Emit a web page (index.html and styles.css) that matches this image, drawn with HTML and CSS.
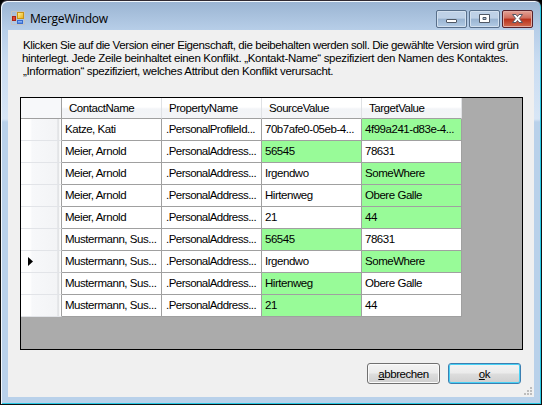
FILE: index.html
```html
<!DOCTYPE html>
<html lang="de">
<head>
<meta charset="utf-8">
<title>MergeWindow</title>
<link rel="stylesheet" href="styles.css">
</head>
<body>
<div class="window">
  <header class="titlebar">
    <svg class="app-icon" width="14" height="14" viewBox="0 0 14 14">
      <defs>
        <linearGradient id="gold" x2="1" y2="1"><stop stop-color="#fff3a0"/><stop offset="1" stop-color="#e9ae10"/></linearGradient>
        <linearGradient id="blue" x2="0" y2="1"><stop stop-color="#a9cdff"/><stop offset="1" stop-color="#3f77df"/></linearGradient>
      </defs>
      <path d="M.5 .5H13.5V13.5H.5Z M.5 9.5H5.5V.5" fill="none" stroke="#c3c3c3"/>
      <rect x="6.500" y="1.500" width="6" height="6" fill="url(#gold)" stroke="#c89314"/>
      <rect x="1.500" y="5.500" width="3" height="4" fill="#e04632" stroke="#a8261a"/>
      <rect x="6.500" y="9.500" width="5" height="3" fill="url(#blue)" stroke="#3a6ccc"/>
    </svg>
    <h1 class="title">MergeWindow</h1>
    <div class="controls">
      <span class="control"><svg width="31" height="18"><rect x="10.500" y="9.500" width="10" height="3" rx=".5" fill="#fff" stroke="#4f5865"/></svg></span>
      <span class="control"><svg width="31" height="18"><path d="M10.500 4.500h10v8h-10z M14 7.500h3v2h-3z" fill="#fff" fill-rule="evenodd" stroke="#4f5865"/></svg></span>
      <span class="control close"><svg width="31" height="18"><path d="M10.500 4.500h3.500l1.500 2 1.500-2h3.500l-3.200 4 3.200 4h-3.500l-1.500-2-1.500 2h-3.500l3.200-4z" fill="#fff" stroke="#565663"/></svg></span>
    </div>
  </header>
  <main class="client">
    <p class="intro">
      <span class="line l1">Klicken Sie auf die Version einer Eigenschaft, die beibehalten werden soll. Die gewählte Version wird grün</span>
      <span class="line l2">hinterlegt. Jede Zeile beinhaltet einen Konflikt. „Kontakt-Name“ spezifiziert den Namen des Kontaktes.</span>
      <span class="line l3">„Information“ spezifiziert, welches Attribut den Konflikt verursacht.</span>
    </p>
    <div class="grid">
      <table>
        <thead><tr><th></th><th>ContactName</th><th>PropertyName</th><th>SourceValue</th><th>TargetValue</th></tr></thead>
        <tbody>
          <tr><th></th><td>Katze, Kati</td><td>.PersonalProfileId...</td><td>70b7afe0-05eb-4...</td><td class="on">4f99a241-d83e-4...</td></tr>
          <tr><th></th><td>Meier, Arnold</td><td>.PersonalAddress...</td><td class="on">56545</td><td>78631</td></tr>
          <tr><th></th><td>Meier, Arnold</td><td>.PersonalAddress...</td><td>Irgendwo</td><td class="on">SomeWhere</td></tr>
          <tr><th></th><td>Meier, Arnold</td><td>.PersonalAddress...</td><td>Hirtenweg</td><td class="on">Obere Galle</td></tr>
          <tr><th></th><td>Meier, Arnold</td><td>.PersonalAddress...</td><td>21</td><td class="on">44</td></tr>
          <tr><th></th><td>Mustermann, Sus...</td><td>.PersonalAddress...</td><td class="on">56545</td><td>78631</td></tr>
          <tr><th><svg class="marker" width="5" height="9"><path d="M0 0L5 4.500 0 9z"/></svg></th><td>Mustermann, Sus...</td><td>.PersonalAddress...</td><td>Irgendwo</td><td class="on">SomeWhere</td></tr>
          <tr><th></th><td>Mustermann, Sus...</td><td>.PersonalAddress...</td><td class="on">Hirtenweg</td><td>Obere Galle</td></tr>
          <tr><th></th><td>Mustermann, Sus...</td><td>.PersonalAddress...</td><td class="on">21</td><td>44</td></tr>
        </tbody>
      </table>
    </div>
    <div class="actions">
      <button class="btn"><span><u>a</u>bbrechen</span></button>
      <button class="btn default"><span><u>o</u>k</span></button>
    </div>
    <svg class="grip" width="9" height="9" fill="#bdbdbd"><path d="M6 0h2v2h-2zM3 3h2v2h-2zM6 3h2v2h-2zM0 6h2v2h-2zM3 6h2v2h-2zM6 6h2v2h-2z"/></svg>
  </main>
</div>
</body>
</html>
```
FILE: styles.css
```css
* { box-sizing: border-box; }
body {
  margin: 0;
  background: #000;
  font: 11.5px/14px "Liberation Sans", Arial, sans-serif;
  color: #000;
  overflow: hidden;
}
.window {
  width: 542px;
  height: 405px;
  padding: 0 6px 5px;
  border: 1px solid #111;
  border-top-color: #302a32;
  border-radius: 7px 7px 0 0;
  background: linear-gradient(#9ab4d2 0, #b7cee8 29px, #c9dcf1 60px, #d8e6f6 118px, #b9d1ea 121px);
  box-shadow: inset 1px 1px #f2f7fc, inset -1px -1px #28c8e4;
}
.titlebar {
  display: flex;
  height: 29px;
  padding: 10px 2px 0 4px;
}
.app-icon { margin-top: 0; }
.title {
  margin: 0 auto 0 5px;
  font: 12px/16px "Open Sans", "Noto Sans", sans-serif;
  letter-spacing: -0.3px;
}
.controls { display: flex; gap: 2px; margin-top: -1px; }
.control {
  width: 31px;
  height: 18px;
  border: 1px solid #586f8b;
  border-radius: 2px;
  background: linear-gradient(#bed1e7 0 45%, #98b3d1 50%, #b3cbe5);
  box-shadow: inset 0 0 0 1px #d2e0ef;
}
.control svg { display: block; margin: -1px; }
.control.close {
  border-color: #57202a;
  background: linear-gradient(#e4a297, #cf6b5b 45%, #b92f1a 50%, #d06b50);
  box-shadow: inset 0 0 0 1px #e3aaa0;
}
.client {
  position: relative;
  margin: 0 1px;
  height: 367px;
  padding: 9px 12px 0;
  background: #f0f0f0;
}
.intro { margin: 0; height: 58px; padding-left: 2px; line-height: 13px; }
.line { display: block; white-space: nowrap; }
.l1 { padding-left: 1px; letter-spacing: -0.41px; }
.l2 { letter-spacing: -0.325px; }
.l3 { padding-left: 1px; letter-spacing: -0.33px; }
.grid {
  width: 503px;
  height: 253px;
  border: 1px solid #000;
  background: #ababab;
  overflow: hidden;
}
table {
  width: 441px;
  table-layout: fixed;
  border-collapse: separate;
  border-spacing: 0;
}
th, td {
  height: 22px;
  padding: 0 0 1px 3px;
  border: solid #a0a0a0;
  border-width: 0 1px 1px 0;
  text-align: left;
  font-weight: normal;
  letter-spacing: -0.46px;
  white-space: nowrap;
  background: #fff;
}
td:nth-child(3) { padding-left: 4px; letter-spacing: -0.54px; }
thead th {
  height: 21px;
  padding: 0 0 0 7px;
  border-right-color: #dfe1e4;
  background: linear-gradient(#fff 45%, #f2f4f7 55%, #f4f5f7);
}
th:first-child {
  width: 41px;
  padding-left: 7px;
  border-right-color: #a0a0a0;
}
thead th:first-child { background: #f7f8fa; }
tbody th:first-child {
  border-bottom-color: #e2e4e8;
  background: linear-gradient(90deg, #fff 9px, #f7f8fa 11px, #f3f4f6 36px, #d9dbde 37px, #fff 39px);
}
td.on { background: #98fb98; }
.marker { display: block; }
.actions {
  display: flex;
  justify-content: flex-end;
  gap: 8px;
  margin: 13px 1px 0 0;
}
.btn {
  width: 73px;
  height: 21px;
  padding: 0;
  border: 1px solid #707070;
  border-radius: 3px;
  background: linear-gradient(#f3f3f3, #ebebeb 48%, #dddddd 52%, #cfcfcf);
  box-shadow: inset 0 0 0 1px #fafafa;
  font: inherit;
  letter-spacing: -0.45px;
}
.btn.default { border-color: #3c7fb1; box-shadow: inset 0 0 0 1px #48d1f5; }
.grip { position: absolute; right: 1px; bottom: 1px; }
```
